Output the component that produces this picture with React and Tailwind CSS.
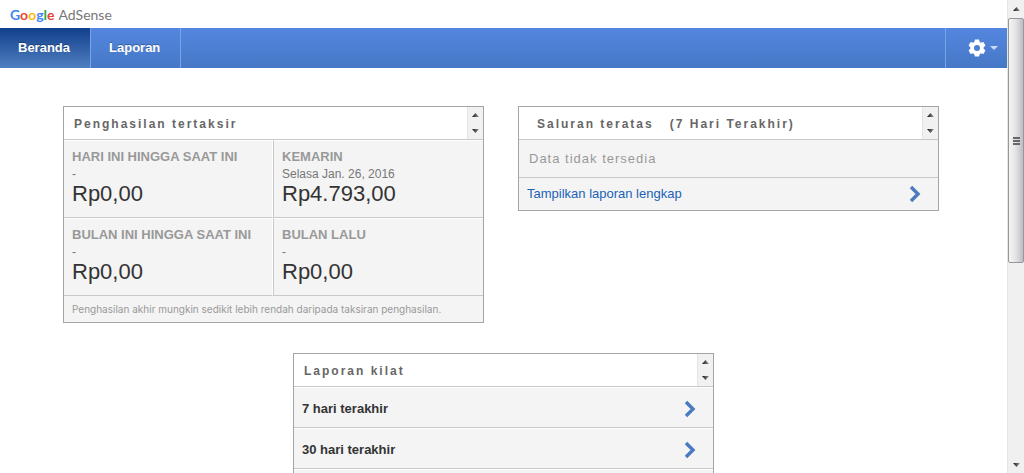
import React from "react";

const tabs = ["Beranda", "Laporan"];

const earnings = [
    { label: "HARI INI HINGGA SAAT INI", note: "-", amount: "Rp0,00" },
    { label: "KEMARIN", note: "Selasa Jan. 26, 2016", amount: "Rp4.793,00" },
    { label: "BULAN INI HINGGA SAAT INI", note: "-", amount: "Rp0,00" },
    { label: "BULAN LALU", note: "-", amount: "Rp0,00" },
];

const quickReports = ["7 hari terakhir", "30 hari terakhir"];

const Arrow = ({ down }) => (
    <svg width="7" height="4" viewBox="0 0 7 4" className="block" aria-hidden="true">
        <defs>
            <linearGradient id="arrowShade" x1="0" y1="0" x2="1" y2="0">
                <stop offset="0" stopColor="#111" />
                <stop offset="1" stopColor="#999" />
            </linearGradient>
        </defs>
        <path d={down ? "M0 0h7L3.5 4z" : "M0 4h7L3.5 0z"} fill="url(#arrowShade)" />
    </svg>
);

const Chevron = () => (
    <svg width="12" height="18" viewBox="0 0 12 18" fill="none" className="shrink-0" aria-hidden="true">
        <path d="M2 2l7 7-7 7" stroke="#4a7abf" strokeWidth="3.4" />
    </svg>
);

// ring with six teeth
const Gear = () => (
    <svg width="18" height="18" viewBox="0 0 24 24" aria-hidden="true">
        <circle cx="12" cy="12" r="6.4" fill="none" stroke="#fff" strokeWidth="4.8" />
        <g fill="#fff">
            {[0, 60, 120, 180, 240, 300].map((angle) => (
                <path key={angle} d="M8.2 4.5L9.3.6h5.400l1.100 3.900z" transform={`rotate(${angle} 12 12)`} />
            ))}
        </g>
    </svg>
);

const Panel = ({ title, indent, children }) => (
    <section className="w-full max-w-[421px] border border-[#a5a5a5] bg-[#f4f4f4]">
        <div className="flex h-[33px] border-b border-[#c8c8c8] bg-white">
            <h2 className={`flex-1 pt-px text-xs leading-8 font-bold tracking-[2px] whitespace-pre text-[#666] ${indent ? "pl-[18px]" : "pl-[10px]"}`}>
                {title}
            </h2>
            <div className="flex w-4 flex-col border-l border-[#e4e4e4] bg-[#f1f1f1]">
                <button className="flex flex-1 items-center justify-center" aria-label="Naik">
                    <Arrow />
                </button>
                <button className="flex flex-1 items-center justify-center" aria-label="Turun">
                    <Arrow down />
                </button>
            </div>
        </div>
        {children}
    </section>
);

const Scrollbar = () => (
    <div className="flex w-[17px] shrink-0 flex-col border-l border-[#e6e6e6] bg-[#f0f0f0]">
        <div className="flex h-[18px] items-center justify-center">
            <Arrow />
        </div>
        <div className="flex flex-1 flex-col">
            <div className="flex h-[56%] flex-col items-center justify-center gap-px rounded-xs border border-[#979797] bg-linear-to-r from-[#f5f5f5] via-[#e2e2e5] to-[#bcbcc4]">
                <span className="h-0.5 w-[7px] bg-[#666]" />
                <span className="h-0.5 w-[7px] bg-[#666]" />
                <span className="h-0.5 w-[7px] bg-[#666]" />
            </div>
        </div>
        <div className="flex h-[17px] items-center justify-center">
            <Arrow down />
        </div>
    </div>
);

export default function App() {
    return (
        <div className="flex h-screen overflow-hidden bg-white font-['Liberation_Sans',Arial,sans-serif] text-[13px] text-[#333]">
            <div className="min-w-0 flex-1">
                <header>
                    <div className="flex h-7 items-center gap-1 pt-[2px] pl-[10px] font-['Lato',sans-serif] text-sm">
                        <span className="font-bold">
                            <span className="text-[#4285f4]">G</span>
                            <span className="text-[#ea4335]">o</span>
                            <span className="text-[#fbbc05]">o</span>
                            <span className="text-[#4285f4]">g</span>
                            <span className="text-[#34a853]">l</span>
                            <span className="text-[#ea4335]">e</span>
                        </span>
                        <span className="text-[#777]">AdSense</span>
                    </div>
                    <nav className="flex h-10 bg-linear-to-b from-[#5486e0] to-[#4678c6]">
                        {tabs.map((tab, i) => (
                            <a
                                key={tab}
                                href="#"
                                className={`border-r border-[#7ba2e6] pr-5 pl-[18px] leading-10 font-bold text-white text-shadow-[0_-1px_0_rgb(0_0_0/0.3)] ${
                                    i === 0 ? "bg-linear-to-b from-[#113f8c] to-[#4f7fc0]" : ""
                                }`}
                            >
                                {tab}
                            </a>
                        ))}
                        <button className="ml-auto flex items-center gap-1 border-l border-[#7ba2e6] pr-[9px] pl-[22px]" aria-label="Setelan">
                            <Gear />
                            <svg width="8" height="4" viewBox="0 0 8 4" aria-hidden="true">
                                <path d="M0 0h8L4 4z" fill="#c9d9f5" />
                            </svg>
                        </button>
                    </nav>
                </header>

                <main className="pt-[38px]">
                    <div className="flex flex-wrap items-start justify-center gap-[34px] pr-[5px]">
                        <Panel title="Penghasilan tertaksir">
                            <div className="grid grid-cols-[209px_1fr]">
                                {earnings.map((item) => (
                                    <div
                                        key={item.label}
                                        className="h-[78px] border-t border-b border-t-white border-b-[#c8c8c8] px-2 pt-2 odd:border-r odd:border-r-white even:border-l even:border-l-[#c8c8c8]"
                                    >
                                        <h3 className="leading-4 font-bold text-[#999]">{item.label}</h3>
                                        <p className="text-xs leading-[18px] text-[#777]">{item.note}</p>
                                        <p className="text-[22px] leading-[22px] text-[#333]">{item.amount}</p>
                                    </div>
                                ))}
                            </div>
                            <p className="px-2 font-['Inter',sans-serif] text-[10px] leading-[26px] text-[#999]">
                                Penghasilan akhir mungkin sedikit lebih rendah daripada taksiran penghasilan.
                            </p>
                        </Panel>

                        <Panel title="Saluran teratas   (7 Hari Terakhir)" indent>
                            <p className="h-[38px] border-b border-[#c8c8c8] pl-[10px] leading-[38px] tracking-[1px] text-[#999]">
                                Data tidak tersedia
                            </p>
                            <a href="#" className="flex h-8 items-center justify-between pr-[17px] pl-2 text-[#1a63b8]">
                                Tampilkan laporan lengkap
                                <Chevron />
                            </a>
                        </Panel>
                    </div>

                    <div className="mt-[30px] flex justify-center">
                        <Panel title="Laporan kilat">
                            {quickReports.map((report) => (
                                <a
                                    key={report}
                                    href="#"
                                    className="flex h-[41px] items-center justify-between border-t border-b border-t-white border-b-[#c8c8c8] pt-[2px] pr-[17px] pl-2 font-bold"
                                >
                                    {report}
                                    <Chevron />
                                </a>
                            ))}
                            <div className="h-[41px] border-t border-white" />
                        </Panel>
                    </div>
                </main>
            </div>
            <Scrollbar />
        </div>
    );
}
